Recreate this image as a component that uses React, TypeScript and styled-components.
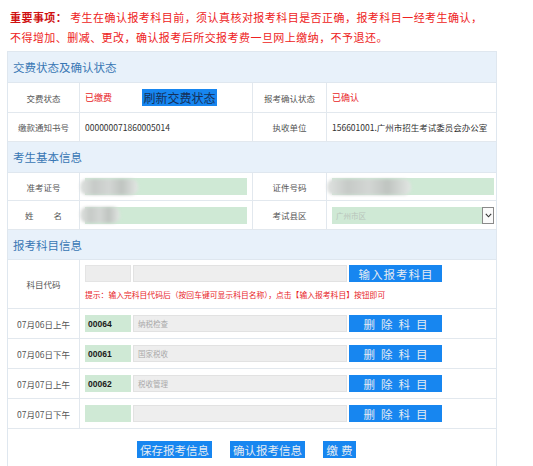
import styled, { createGlobalStyle } from "styled-components";

const GlobalStyle = createGlobalStyle`
  body {
    margin: 0;
    background: #fff;
    font-family: "Liberation Sans", "Noto Sans CJK SC", sans-serif;
  }
`;

const subjects = [
  { time: "07月06日上午", code: "00064", name: "纳税检查" },
  { time: "07月06日下午", code: "00061", name: "国家税收" },
  { time: "07月07日上午", code: "00062", name: "税收管理" },
  { time: "07月07日下午", code: "", name: "" },
];

export default function App() {
  return (
    <Page>
      <GlobalStyle />
      <Notice>
        <b>重要事项：</b> 考生在确认报考科目前，须认真核对报考科目是否正确，报考科目一经考生确认，
        <br />
        不得增加、删减、更改，确认报考后所交报考费一旦网上缴纳，不予退还。
      </Notice>

      <Panel>
        <SectionHead>交费状态及确认状态</SectionHead>
        <InfoRow $h={29}>
          <Label>交费状态</Label>
          <Value>
            <Red>已缴费</Red>
            <RefreshButton>刷新交费状态</RefreshButton>
          </Value>
          <Label>报考确认状态</Label>
          <Value>
            <Red>已确认</Red>
          </Value>
        </InfoRow>
        <InfoRow $h={28}>
          <Label>缴款通知书号</Label>
          <Value>
            <Plain>000000071860005014</Plain>
          </Value>
          <Label>执收单位</Label>
          <Value>
            <Plain>156601001.广州市招生考试委员会办公室</Plain>
          </Value>
        </InfoRow>

        <SectionHead>考生基本信息</SectionHead>
        <InfoRow $h={27}>
          <Label>准考证号</Label>
          <Value>
            <GreenBox>
              <Blur $w={58} />
            </GreenBox>
          </Value>
          <Label>证件号码</Label>
          <Value>
            <GreenBox>
              <Blur $w={84} />
            </GreenBox>
          </Value>
        </InfoRow>
        <InfoRow $h={28}>
          <Label>
            姓<Gap />名
          </Label>
          <Value>
            <GreenBox>
              <Blur $w={40} />
            </GreenBox>
          </Value>
          <Label>考试县区</Label>
          <Value>
            <SelectBox>
              <SelectText>广州市区</SelectText>
              <SelectArrow>
                <svg width="7" height="5" viewBox="0 0 7 5">
                  <path d="M0.8 0.8 L3.5 3.8 L6.2 0.8" fill="none" stroke="#333" strokeWidth="1.1" />
                </svg>
              </SelectArrow>
            </SelectBox>
          </Value>
        </InfoRow>

        <SectionHead $h={29}>报考科目信息</SectionHead>
        <SubjectRow $h={48}>
          <Label>科目代码</Label>
          <SubjectCell $column>
            <InputLine>
              <CodeBox />
              <NameBox />
              <BlueButton $spacing={1}>输入报考科目</BlueButton>
            </InputLine>
            <Hint>提示：输入完科目代码后（按回车键可显示科目名称），点击【输入报考科目】按钮即可</Hint>
          </SubjectCell>
        </SubjectRow>
        {subjects.map((s) => (
          <SubjectRow key={s.time} $h={29}>
            <Label>{s.time}</Label>
            <SubjectCell>
              <InputLine>
                <CodeBox $filled>{s.code}</CodeBox>
                <NameBox>{s.name}</NameBox>
                <BlueButton $spacing={6}>删除科目</BlueButton>
              </InputLine>
            </SubjectCell>
          </SubjectRow>
        ))}
        <Actions>
          <BlueButton $w={75}>保存报考信息</BlueButton>
          <BlueButton $w={75}>确认报考信息</BlueButton>
          <BlueButton $w={33} $spacing={3}>缴费</BlueButton>
        </Actions>
      </Panel>
    </Page>
  );
}

const Page = styled.div`
  width: 533px;
  height: 466px;
  overflow: hidden;
  padding-top: 7px;
  box-sizing: border-box;
`;

const Notice = styled.div`
  padding-left: 10px;
  font-family: "Noto Sans CJK SC", sans-serif;
  font-size: 11px;
  letter-spacing: 0.45px;
  line-height: 20px;
  color: #ee2222;

  b {
    color: #d01010;
    font-weight: 700;
  }
`;

const Panel = styled.div`
  margin: 4px 0 0 7px;
  width: 490px;
  border: 1px solid #dfe7ef;
  border-bottom: none;
  box-sizing: border-box;
  font-family: "Noto Sans CJK SC", sans-serif;
`;

const SectionHead = styled.div<{ $h?: number }>`
  height: ${(p) => p.$h ?? 30}px;
  display: flex;
  align-items: center;
  padding-left: 5px;
  background: #e8f1fa;
  border-bottom: 1px solid #dfe7ef;
  color: #3877b4;
  font-size: 11.5px;
`;

const InfoRow = styled.div<{ $h: number }>`
  display: grid;
  grid-template-columns: 72px 173px 74px 169px;
  height: ${(p) => p.$h}px;
  border-bottom: 1px solid #e2e8ee;
  background: #fff;
`;

const SubjectRow = styled.div<{ $h: number }>`
  display: grid;
  grid-template-columns: 72px 416px;
  height: ${(p) => p.$h}px;
  border-bottom: 1px solid #e2e8ee;
`;

const Label = styled.div`
  display: flex;
  align-items: center;
  justify-content: center;
  border-right: 1px solid #e2e8ee;
  color: #555;
  font-size: 8.5px;
`;

const Gap = styled.span`
  display: inline-block;
  width: 20px;
`;

const Value = styled.div`
  display: flex;
  align-items: center;
  padding-left: 5px;
  border-right: 1px solid #e2e8ee;

  &:last-child {
    border-right: none;
  }
`;

const Red = styled.span`
  color: #e8241f;
  font-size: 9px;
  width: 57px;
`;

const Plain = styled.span`
  color: #333;
  font-size: 8.5px;
`;

const RefreshButton = styled.div`
  width: 75px;
  height: 17px;
  display: flex;
  align-items: center;
  justify-content: center;
  background: #1786f0;
  color: #15305a;
  font-size: 12px;
`;

const GreenBox = styled.div`
  width: 162px;
  height: 17px;
  background: #cfe9d5;
  display: flex;
  align-items: center;
  overflow: visible;
`;

const Blur = styled.span<{ $w: number }>`
  width: ${(p) => p.$w}px;
  height: 16px;
  margin-left: -5px;
  background: linear-gradient(90deg, #dfe2e0 0%, #c6cac7 25%, #d3d6d4 50%, #bfc4c0 72%, #e2e6e3 100%);
  filter: blur(1.8px);
  border-radius: 7px;
`;

const SelectBox = styled.div`
  width: 162px;
  height: 17px;
  background: #cfe9d5;
  display: flex;
  align-items: center;
  justify-content: space-between;
`;

const SelectText = styled.span`
  padding-left: 4px;
  color: #b8c4bb;
  font-size: 7.5px;
`;

const SelectArrow = styled.span`
  width: 10px;
  height: 15px;
  background: #fafafa;
  border: 1px solid #8a8a8a;
  display: flex;
  align-items: center;
  justify-content: center;
`;

const SubjectCell = styled.div<{ $column?: boolean }>`
  display: flex;
  flex-direction: column;
  justify-content: ${(p) => (p.$column ? "flex-start" : "center")};
  padding: ${(p) => (p.$column ? "5px 0 0 5px" : "0 0 0 5px")};
  gap: 5px;
`;

const InputLine = styled.div`
  display: flex;
  align-items: center;
  gap: 2px;
`;

const CodeBox = styled.div<{ $filled?: boolean }>`
  width: 46px;
  height: 17px;
  box-sizing: border-box;
  display: flex;
  align-items: center;
  padding-left: 2px;
  background: ${(p) => (p.$filled ? "#cfe9d5" : "#ededed")};
  border: 1px solid ${(p) => (p.$filled ? "#cfe9d5" : "#e4e4e4")};
  color: #1a1a1a;
  font-family: "Liberation Sans", sans-serif;
  font-size: 8.5px;
  font-weight: 700;
`;

const NameBox = styled.div`
  width: 214px;
  height: 17px;
  box-sizing: border-box;
  display: flex;
  align-items: center;
  padding-left: 4px;
  background: #eeeeee;
  border: 1px solid #e2e2e2;
  color: #a9a9a9;
  font-size: 7.5px;
`;

const BlueButton = styled.div<{ $w?: number; $spacing?: number }>`
  width: ${(p) => p.$w ?? 93}px;
  height: 17px;
  display: flex;
  align-items: center;
  justify-content: center;
  background: #1786f0;
  color: #e4ebf3;
  font-size: 11.5px;
  letter-spacing: ${(p) => p.$spacing ?? 0}px;
  text-indent: ${(p) => p.$spacing ?? 0}px;
`;

const Hint = styled.div`
  color: #e8241f;
  font-size: 7.8px;
  padding-top: 2px;
`;

const Actions = styled.div`
  height: 40px;
  display: flex;
  align-items: flex-start;
  justify-content: center;
  gap: 18px;
  padding: 12px 11px 0 0;
  box-sizing: border-box;
`;
